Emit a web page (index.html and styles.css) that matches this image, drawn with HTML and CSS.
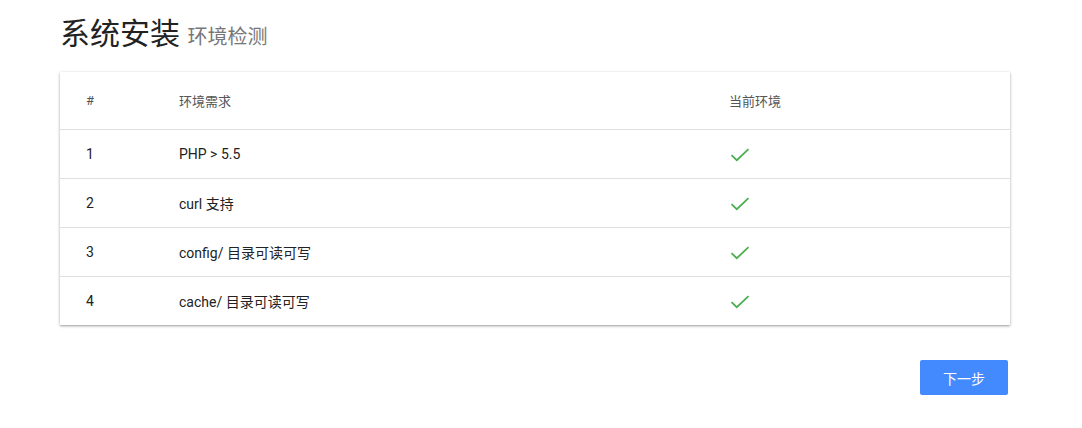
FILE: index.html
```html
<!DOCTYPE html>
<html lang="zh-CN">
<head>
<meta charset="utf-8">
<title>系统安装</title>
<link rel="stylesheet" href="styles.css">
</head>
<body>
<div class="page">
  <h1 class="title">系统安装 <small class="sub">环境检测</small></h1>
  <div class="card">
    <table class="tbl">
      <thead>
        <tr><th class="c1">#</th><th class="c2">环境需求</th><th class="c3">当前环境</th></tr>
      </thead>
      <tbody>
        <tr><td class="c1">1</td><td class="c2">PHP &gt; 5.5</td><td class="c3"><svg class="ok" viewBox="0 0 20 14" width="20" height="14"><path d="M1.5 7.2 L6.8 12.2 L18.5 1.2" fill="none" stroke="#4caf50" stroke-width="1.8"/></svg></td></tr>
        <tr><td class="c1">2</td><td class="c2">curl 支持</td><td class="c3"><svg class="ok" viewBox="0 0 20 14" width="20" height="14"><path d="M1.5 7.2 L6.8 12.2 L18.5 1.2" fill="none" stroke="#4caf50" stroke-width="1.8"/></svg></td></tr>
        <tr><td class="c1">3</td><td class="c2">config/ 目录可读可写</td><td class="c3"><svg class="ok" viewBox="0 0 20 14" width="20" height="14"><path d="M1.5 7.2 L6.8 12.2 L18.5 1.2" fill="none" stroke="#4caf50" stroke-width="1.8"/></svg></td></tr>
        <tr><td class="c1">4</td><td class="c2">cache/ 目录可读可写</td><td class="c3"><svg class="ok" viewBox="0 0 20 14" width="20" height="14"><path d="M1.5 7.2 L6.8 12.2 L18.5 1.2" fill="none" stroke="#4caf50" stroke-width="1.8"/></svg></td></tr>
      </tbody>
    </table>
  </div>
  <div class="actions">
    <button class="btn">下一步</button>
  </div>
</div>
</body>
</html>
```
FILE: styles.css
```css
html, body {
  margin: 0;
  padding: 0;
  background: #fff;
}
body {
  font-family: Roboto, "Noto Sans CJK SC", sans-serif;
  color: #333;
}
.page {
  width: 950px;
  padding: 0 0 0 60px;
}
.title {
  margin: 0;
  padding-top: 14px;
  height: 58px;
  box-sizing: border-box;
  font-size: 30px;
  font-weight: 400;
  color: #222;
  line-height: 40px;
}
.sub {
  font-size: 20px;
  color: #777;
  font-weight: 400;
}
.card {
  background: #fff;
  box-shadow: 0 1px 3px rgba(0,0,0,0.3), 0 1px 1px rgba(0,0,0,0.1);
  margin-top: 14px;
}
.tbl {
  width: 100%;
  border-collapse: collapse;
  font-size: 14px;
}
.tbl th {
  font-weight: 400;
  color: #555;
  font-size: 13px;
  height: 57px;
  text-align: left;
  padding: 0;
}
.tbl td {
  height: 48px;
  border-top: 1px solid #e0e0e0;
  padding: 0;
  color: #222;
}
.c1 { width: 93px; padding-left: 26px !important; }
.c2 { width: 550px; }
.ok { display: block; margin-left: 1px; margin-top: 2px; }
.actions {
  display: flex;
  justify-content: flex-end;
  padding-top: 35px;
  padding-right: 2px;
}
.btn {
  width: 88px;
  height: 35px;
  border: none;
  border-radius: 2px;
  background: #448aff;
  color: #fff;
  font-family: Roboto, "Noto Sans CJK SC", sans-serif;
  font-size: 14px;
}
```
